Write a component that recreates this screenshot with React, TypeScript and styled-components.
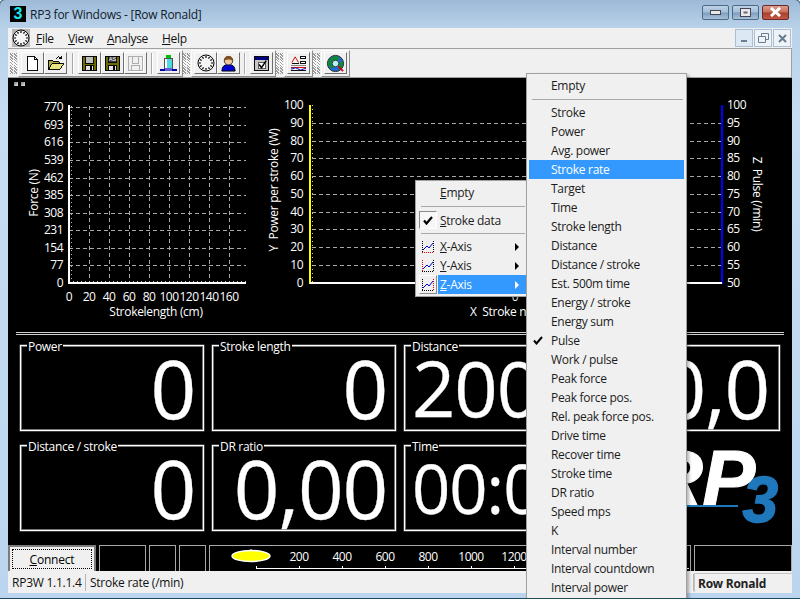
import React from 'react';
import styled, { createGlobalStyle } from 'styled-components';

const GlobalStyle = createGlobalStyle`
    html, body { margin: 0; padding: 0; background: #fff; }
    body { font-family: "Open Sans", "Liberation Sans", sans-serif; font-size: 12px; color: #000; }
`

const Frame = styled.div`
    position: relative;
    box-sizing: border-box;
    display: flex;
    flex-direction: column;
    overflow: hidden;
    margin: -1px 0 0 -1px;
    width: 802px;
    height: 600px;
    padding: 0 8px 5px 8px;
    background: linear-gradient(180deg, #9db9d6 0px, #b9d2ea 28px, #c6dcf3 120px, #bcd5ee 600px);
    border: 1px solid #1d4a5c;
    border-radius: 6px 6px 0 0;
`

const TitleBar = styled.div`
    height: 28px;
    flex: none;
    display: flex;
    align-items: center;
    gap: 4px;
    padding-left: 2px;
`

const AppIcon = styled.div`
    width: 16px;
    height: 16px;
    background: #000;
    color: #19e6f0;
    font: bold 16px/16px "Liberation Sans", sans-serif;
    text-align: center;
`

const TitleText = styled.div`
    font-size: 12px;
    letter-spacing: -0.25px;
    color: #10202c;
    flex: 1;
`

const CaptionButtons = styled.div`
    display: flex;
    gap: 3px;
    margin: -4px 3px 0 0;
`

const CaptionButton = styled.div<{ $close?: boolean }>`
    width: 27px;
    height: 15px;
    box-sizing: border-box;
    border: 1px solid ${p => p.$close ? '#6b2a2a' : '#4d6a85'};
    border-radius: 2px;
    background: ${p => p.$close
        ? 'linear-gradient(180deg, #dc9c8c 0%, #c8705c 45%, #a8402c 55%, #c25a46 100%)'
        : 'linear-gradient(180deg, #bcd2e6 0%, #a4bfd8 45%, #7f9fbf 55%, #a6c0da 100%)'};
    display: flex;
    align-items: center;
    justify-content: center;
`

const MenuBar = styled.div`
    height: 20px;
    flex: none;
    display: flex;
    align-items: center;
    background: #f0f0f0;
`

const MenuClock = styled.div`
    width: 18px;
    height: 18px;
    margin: 0 6px 0 4px;
    background: #b8b8b8;
`

const MenuLabel = styled.span<{ $width: number }>`
    width: ${p => p.$width}px;
    font-size: 12px;
    letter-spacing: -0.3px;
    color: #111;
`

const Key = styled.span`
    text-decoration: underline;
`

const MdiButtons = styled.div`
    margin-left: auto;
    display: flex;
    gap: 1px;
    margin-right: 1px;
`

const MdiButton = styled.div<{ $first?: boolean }>`
    width: 18px;
    height: 18px;
    box-sizing: border-box;
    border: 1px solid #a9bfd4;
    background: ${p => p.$first ? '#dce9f5' : '#eef3f8'};
    display: flex;
    align-items: center;
    justify-content: center;
`

const CoolBar = styled.div`
    height: 30px;
    flex: none;
    box-sizing: border-box;
    display: flex;
    align-items: center;
    background: #f0f0f0;
    border: 1px solid #a0a0a0;
    border-left: 0;
    padding-left: 2px;
`

const Band = styled.div`
    height: 27px;
    display: flex;
    align-items: center;
    box-sizing: border-box;
    padding: 0 2px;
    border-right: 1px solid #8c8c8c;
    border-bottom: 1px solid #8c8c8c;
    border-top: 1px solid #fff;
    border-left: 1px solid #fff;
`

const Grip = styled.div`
    width: 3px;
    height: 21px;
    margin-right: 1px;
    background: repeating-linear-gradient(45deg, #9a9a9a 0 1px, #fff 1px 2px);
`

const ToolButton = styled.div`
    width: 23px;
    height: 22px;
    box-sizing: border-box;
    border: 1px solid;
    border-color: #fff #6e6e6e #6e6e6e #fff;
    display: flex;
    align-items: center;
    justify-content: center;
`

const ToolGap = styled.div<{ $wide?: boolean }>`
    width: 1px;
    height: 21px;
    margin: 0 4px 0 ${p => p.$wide ? '5px' : '4px'};
    background: #a8a8a8;
    border-right: 1px solid #fff;
`

const Client = styled.div`
    flex: 1;
    min-height: 0;
    background: #000;
    display: flex;
    flex-direction: column;
`

const ChartRow = styled.div`
    height: 254px;
    flex: none;
    display: flex;
`

const ChartSvg = styled.svg`
    display: block;
    flex: none;
    font-family: "Open Sans", "Liberation Sans", sans-serif;
    font-size: 12px;
    letter-spacing: -0.3px;
    fill: #fff;
`

const Tick = styled.text`
    letter-spacing: -0.5px;
`

const Divider = styled.div`
    height: 1px;
    flex: none;
    margin: 0 8px;
    border-top: 1px solid #d0d0d0;
    border-bottom: 1px solid #d0d0d0;
`

const TileGrid = styled.div`
    flex: none;
    display: grid;
    grid-template-columns: repeat(4, 184px);
    grid-template-rows: 86px 86px;
    column-gap: 8px;
    row-gap: 14px;
    padding: 10px 12px 14px 12px;
`

const Tile = styled.div`
    position: relative;
    box-sizing: border-box;
    border: 1px solid #fff;
    box-shadow: inset 0 0 0 1px #777, 0 0 0 0.5px #777;
    display: flex;
`

const TileLabel = styled.span`
    position: absolute;
    top: -7px;
    left: 6px;
    padding: 0 1px;
    background: #000;
    color: #fff;
    font-size: 12px;
    letter-spacing: -0.3px;
    line-height: 16px;
`

// The real value text shrinks to fit its box, so the size varies per tile.
const TileValue = styled.div<{ $left?: boolean; $size: number; $pad: number }>`
    flex: 1;
    padding: 0 ${p => p.$left ? 0 : p.$pad}px 0 ${p => p.$left ? p.$pad : 0}px;
    text-align: ${p => p.$left ? 'left' : 'right'};
    white-space: nowrap;
    color: #fff;
    font-size: ${p => p.$size}px;
    line-height: 84px;
    letter-spacing: -0.015em;
    -webkit-text-stroke: 0.3px #fff;
`

const Logo = styled.div`
    display: flex;
    align-items: flex-start;
    justify-content: flex-end;
    font-family: "Liberation Sans", sans-serif;
    font-weight: bold;
    font-style: italic;
`

const LogoWord = styled.span`
    position: relative;
    color: #fff;
    font-size: 80px;
    line-height: 68px;
    height: 62px;
    letter-spacing: -1px;
    -webkit-text-stroke: 1px #fff;

    &::after {
        content: '';
        position: absolute;
        left: 0;
        right: 16px;
        bottom: 0;
        height: 2px;
        background: #1f78bb;
    }
`

const LogoDigit = styled.span`
    color: #1f78bb;
    font-size: 64px;
    line-height: 64px;
    margin: 23px 2px 0 -12px;
    -webkit-text-stroke: 1.5px #1f78bb;
`

const BottomRow = styled.div`
    height: 28px;
    flex: none;
    display: flex;
    gap: 3px;
    padding-bottom: 1px;
    box-sizing: border-box;
`

const ConnectWrap = styled.div`
    width: 89px;
    box-sizing: border-box;
    border: 2px solid #7c7c7c;
    margin-bottom: -1px;
    background: #f0f0f0;
    padding: 2px;
`

const ConnectButton = styled.div`
    height: 100%;
    box-sizing: border-box;
    border: 1px dotted #000;
    display: flex;
    align-items: center;
    justify-content: center;
    font-size: 12px;
    letter-spacing: -0.2px;
`

const Slot = styled.div<{ $width: number }>`
    width: ${p => p.$width}px;
    flex: none;
    box-sizing: border-box;
    border: 1px solid #a8a8a8;
    overflow: hidden;
`

const StatusBar = styled.div`
    height: 22px;
    flex: none;
    display: flex;
    align-items: center;
    background: #f0f0f0;
    font-size: 12px;
    letter-spacing: -0.25px;
    color: #111;
`

const StatusCell = styled.div<{ $width?: number }>`
    width: ${p => p.$width ? `${p.$width}px` : 'auto'};
    flex: ${p => p.$width ? 'none' : '1'};
    box-sizing: border-box;
    padding-left: 4px;
    height: 17px;
    line-height: 17px;
    border-right: 1px solid #b4b4b4;
`

const StatusName = styled.div`
    width: 98px;
    flex: none;
    box-sizing: border-box;
    padding-left: 3px;
    height: 19px;
    line-height: 19px;
    font-weight: 700;
    color: #222;
    border: 1px solid #c4c4c4;
    border-width: 1px 0 0 1px;
`

const Popup = styled.div`
    position: absolute;
    box-sizing: border-box;
    background: #f0f0f0;
    border: 1px solid #a0a0a0;
    box-shadow: 2px 2px 3px rgba(0, 0, 0, 0.3);
    padding: 2px;
    font-size: 12px;
    letter-spacing: -0.3px;
`

const MainPopup = styled(Popup)`
    left: 526px;
    top: 73px;
    width: 161px;
    height: 527px;
    z-index: 2;
`

const SidePopup = styled(Popup)`
    left: 415px;
    top: 180px;
    width: 114px;
    height: 117px;
    z-index: 1;
`

const MenuRow = styled.div<{ $active?: boolean; $indent: number }>`
    position: relative;
    height: 19px;
    line-height: 19px;
    padding-left: ${p => p.$indent}px;
    color: ${p => p.$active ? '#fff' : '#1c1c1c'};
    background: ${p => p.$active ? '#3399ff' : 'transparent'};
    white-space: nowrap;
`

const MenuGap = styled.div<{ $height: number }>`
    height: ${p => p.$height}px;
    display: flex;
    align-items: center;
    padding: 0 1px 0 3px;
    &::after {
        content: '';
        flex: 1;
        height: 1px;
        background: #a8a8a8;
    }
`

const Gutter = styled.div<{ $raised?: boolean; $sunken?: boolean }>`
    position: absolute;
    left: 1px;
    top: 0;
    width: 18px;
    height: ${p => p.$sunken ? '18px' : '19px'};
    box-sizing: border-box;
    display: flex;
    align-items: center;
    justify-content: center;
    ${p => p.$raised && 'border: 1px solid; border-color: #fff #8a8a8a #8a8a8a #fff;'}
    ${p => p.$sunken && 'border: 1px solid; border-color: #8a8a8a #fff #fff #8a8a8a; background: #f7f7f7;'}
`

const SideRowBody = styled.div<{ $active?: boolean }>`
    position: relative;
    margin-left: 20px;
    padding-left: 2px;
    height: 19px;
    line-height: 19px;
    color: ${p => p.$active ? '#fff' : '#1c1c1c'};
    background: ${p => p.$active ? '#3399ff' : 'transparent'};
`

const SideRowWrap = styled.div`
    position: relative;
`

const Arrow = styled.span<{ $active?: boolean }>`
    position: absolute;
    right: 7px;
    top: 6px;
    width: 0;
    height: 0;
    border-left: 4px solid ${p => p.$active ? '#fff' : '#000'};
    border-top: 4px solid transparent;
    border-bottom: 4px solid transparent;
`

const PopupCheck = styled.svg`
    position: absolute;
    left: 4px;
    top: 5px;
`

const Squares = styled.div`
    position: absolute;
    left: 14px;
    top: 82px;
    display: flex;
    gap: 3px;
`

const Square = styled.div`
    width: 4px;
    height: 4px;
    background: linear-gradient(135deg, #777, #eee);
`

const CheckMark = () => (
    <svg width="10" height="9" viewBox="0 0 10 9"><path d="M1 4.5 L3.5 7.5 L9 1" fill="none" stroke="#000" strokeWidth="2.2" /></svg>
)

const Ico = ({ children }: { children: React.ReactNode }) => (
    <svg width="17" height="17" viewBox="0 0 18 18" shapeRendering="crispEdges">{children}</svg>
)

const NewIcon = () => <Ico><path d="M3.5 1.5 H11 L14.5 5 V16.5 H3.5 Z" fill="#fff" stroke="#000" /><path d="M11 1.5 V5 H14.5" fill="none" stroke="#000" /></Ico>
const OpenIcon = () => (
    <Ico>
        <path d="M1.5 5.5 H6 L7 7 H13 V15.5 H1.5 Z" fill="#a8a840" stroke="#000" />
        <path d="M1.5 15.5 L5 9.5 H17.5 L13.5 15.5 Z" fill="#e6e680" stroke="#000" />
        <path d="M9 3.5 Q12 0.5 15.5 3.5 M15.5 1 V4 H12.5" fill="none" stroke="#000" />
    </Ico>
)
const Floppy = ({ label }: { label?: string }) => (
    <Ico>
        <rect x="1.5" y="1.5" width="15" height="15" fill="#6c6c00" stroke="#000" />
        <rect x="4.5" y="1.5" width="9" height={label ? 6 : 7} fill={label ? '#444' : '#c0c0c0'} stroke="#000" />
        {label && <text x="9" y="6.8" textAnchor="middle" fontSize="6" fontFamily="Liberation Sans" fill="#fff">{label}</text>}
        <rect x="4.5" y="11.5" width="9" height="5" fill="#e4e4e4" stroke="#000" />
        <rect x="10" y="12" width="2" height="4" fill="#000" />
    </Ico>
)
const SaveOff = () => (
    <Ico>
        <rect x="1.5" y="1.5" width="15" height="15" fill="none" stroke="#a8a8a8" />
        <path d="M5.5 2 V9 H12.5 V2 M4.5 16 V11.5 H13.5 V16" fill="none" stroke="#a8a8a8" />
        <path d="M2.5 17.5 H17.5 V2.5" fill="none" stroke="#fff" />
    </Ico>
)
const DoorIcon = () => (
    <Ico>
        <rect x="6" y="0" width="6" height="3" fill="#00c000" />
        <rect x="4.5" y="3.5" width="9" height="11" fill="#fff" stroke="#444" />
        <rect x="7" y="4" width="6" height="10" fill="#50d8e0" />
        <path d="M0 16 H5 M13 16 H18" stroke="#0000a8" strokeWidth="2" />
        <rect x="5" y="14" width="8" height="3" fill="#6060d0" />
    </Ico>
)
const ClockIcon = ({ size = 18 }: { size?: number }) => (
    <svg width={size} height={size} viewBox="0 0 18 18">
        <circle cx="9" cy="9" r="8" fill="#f4f4f4" stroke="#000" />
        {Array.from({ length: 12 }).map((_, i) => {
            const a = (i * Math.PI) / 6
            return <line key={i} x1={9 + 5 * Math.cos(a)} y1={9 + 5 * Math.sin(a)} x2={9 + 7 * Math.cos(a)} y2={9 + 7 * Math.sin(a)} stroke="#000" strokeWidth="1.2" />
        })}
    </svg>
)
const PersonIcon = () => (
    <Ico>
        <path d="M2 17 Q2 10 9 10 Q16 10 16 17 Z" fill="#0000d0" stroke="#000" shapeRendering="auto" />
        <circle cx="9" cy="6" r="4.5" fill="#f0c8a0" stroke="#333" shapeRendering="auto" />
        <path d="M4.5 6 Q4.5 1 9 1 Q13.5 1 13.5 6 Q9 3.5 4.5 6 Z" fill="#805020" shapeRendering="auto" />
    </Ico>
)
const CheckListIcon = () => (
    <Ico>
        <rect x="1.5" y="1.5" width="15" height="15" fill="#c8c8c8" stroke="#000" />
        <rect x="2" y="2" width="14" height="3" fill="#000080" />
        <rect x="5.5" y="7.5" width="8" height="7" fill="#fff" stroke="#555" />
        <path d="M6.5 10 L9 13.5 L14 6" fill="none" stroke="#000" strokeWidth="1.6" shapeRendering="auto" />
    </Ico>
)
const ReportIcon = () => (
    <Ico>
        <path d="M2 8.5 H10" stroke="#000" />
        <path d="M2 8 L5.5 2 L9 8" fill="none" stroke="#d00000" shapeRendering="auto" />
        <rect x="11.5" y="1.5" width="5" height="2" fill="#fff" stroke="#000" />
        <rect x="11.5" y="6.5" width="5" height="2" fill="#fff" stroke="#000" />
        <path d="M1 11.5 H17" stroke="#808080" />
        <path d="M1 13.5 H17" stroke="#d00000" />
        <path d="M1 15 L6 13.5 L11 16 L17 14" fill="none" stroke="#0000d0" shapeRendering="auto" />
        <path d="M1 16.5 H17" stroke="#000" />
    </Ico>
)
const GlobeIcon = () => (
    <svg width="19" height="19" viewBox="0 0 20 20">
        <circle cx="10" cy="10" r="8.5" fill="#206ad0" stroke="#222" />
        <path d="M3 6 L10 1.5 L14 4 L12 8 L7 9 L9 14 L5 15 L2 11 Z" fill="#0c8a30" />
        <path d="M13 9 L18 8 L17 14 L13 17 Z" fill="#0c8a30" />
        <circle cx="10" cy="10" r="3.5" fill="#b8f0f4" stroke="#335" />
        <path d="M13 13 L18 18" stroke="#d00020" strokeWidth="2" />
    </svg>
)

const AxisIcon = ({ axis }: { axis: 'x' | 'y' | 'z' }) => (
    <svg width="14" height="14" viewBox="0 0 14 14" shapeRendering="crispEdges">
        <path d="M1.5 1 V13" stroke={axis === 'y' ? '#e00000' : '#000'} strokeDasharray="1 1" />
        <path d="M12.5 1 V13" stroke={axis === 'z' ? '#e00000' : '#000'} strokeDasharray="1 1" />
        <path d="M1 12.5 H13" stroke={axis === 'x' ? '#e00000' : '#000'} strokeDasharray="1 1" />
        <path d="M2 10 L6 6 L8 8 L12 3" fill="none" stroke="#0000d0" shapeRendering="auto" />
    </svg>
)

const forceLabels = [770, 693, 616, 539, 462, 385, 308, 231, 154, 77, 0]
const forceY = [107, 125, 142, 160, 178, 195, 213, 230, 248, 265, 283]
const lengthLabels = [0, 20, 40, 60, 80, 100, 120, 140, 160]
const gridY = [123, 141, 158, 176, 194, 212, 229, 247, 265]
const powerY = [105, ...gridY, 283]
const powerLabels = [100, 90, 80, 70, 60, 50, 40, 30, 20, 10, 0]
const pulseLabels = [100, 95, 90, 85, 80, 75, 70, 65, 60, 55, 50]

const ForceChart = () => (
    <ChartSvg width={252} height={254} viewBox="8 78 252 254">
        {forceY.slice(0, -1).map(y => <line key={y} x1={69} x2={246} y1={y} y2={y} stroke="#a8a8a8" strokeDasharray="4 3" shapeRendering="crispEdges" />)}
        {lengthLabels.slice(1).map((l, i) => <line key={l} x1={89 + i * 20} x2={89 + i * 20} y1={106} y2={283} stroke="#a8a8a8" strokeDasharray="4 3" shapeRendering="crispEdges" />)}
        <line x1={71} x2={71} y1={106} y2={283} stroke="#bbb" strokeDasharray="1 3" shapeRendering="crispEdges" />
        <line x1={69} x2={246} y1={281} y2={281} stroke="#bbb" strokeDasharray="1 3" shapeRendering="crispEdges" />
        <line x1={69} x2={69} y1={105} y2={284} stroke="#fff" strokeWidth={2} shapeRendering="crispEdges" />
        <line x1={68} x2={246} y1={283} y2={283} stroke="#fff" strokeWidth={2} shapeRendering="crispEdges" />
        {forceLabels.map((l, i) => <Tick key={l} x={63} y={forceY[i] + 4} textAnchor="end">{l}</Tick>)}
        {lengthLabels.map((l, i) => <Tick key={l} x={69 + i * 20} y={301} textAnchor="middle">{l}</Tick>)}
        <text x={156} y={316} textAnchor="middle">Strokelength (cm)</text>
        <text transform="translate(38 193) rotate(-90)" textAnchor="middle">Force (N)</text>
    </ChartSvg>
)

const StrokeChart = () => (
    <ChartSvg width={532} height={254} viewBox="260 78 532 254">
        {gridY.map(y => <line key={y} x1={312} x2={722} y1={y} y2={y} stroke="#a8a8a8" strokeDasharray="4 3" shapeRendering="crispEdges" />)}
        <line x1={312} x2={312} y1={105} y2={283} stroke="#e0e000" strokeDasharray="1 3" shapeRendering="crispEdges" />
        <line x1={310} x2={310} y1={105} y2={284} stroke="#ffff00" strokeWidth={2} shapeRendering="crispEdges" />
        <line x1={722} x2={722} y1={105} y2={284} stroke="#0000ff" strokeWidth={2} shapeRendering="crispEdges" />
        <line x1={310} x2={722} y1={283} y2={283} stroke="#fff" strokeWidth={2} shapeRendering="crispEdges" />
        {powerLabels.map((l, i) => <Tick key={l} x={303} y={powerY[i] + 4} textAnchor="end">{l}</Tick>)}
        {pulseLabels.map((l, i) => <Tick key={l} x={727} y={powerY[i] + 4}>{l}</Tick>)}
        <Tick x={515} y={301} textAnchor="middle">0</Tick>
        <text x={470} y={316} xmlSpace="preserve">X  Stroke number</text>
        <text transform="translate(278 190) rotate(-90)" textAnchor="middle" xmlSpace="preserve">Y  Power per stroke (W)</text>
        <text transform="translate(753 194) rotate(90)" textAnchor="middle" xmlSpace="preserve">Z  Pulse (/min)</text>
    </ChartSvg>
)

const Gauge = () => (
    <ChartSvg width={480} height={26} viewBox="211 546 480 26">
        <ellipse cx={252} cy={556} rx={19} ry={5.5} fill="#ffff00" stroke="#fff" strokeWidth={1.5} />
        <line x1={252} x2={252} y1={549} y2={551} stroke="#fff" />
        <line x1={257} x2={690} y1={568} y2={568} stroke="#fff" shapeRendering="crispEdges" />
        {[257, 300, 343, 386, 429, 472, 515, 558, 601, 644, 687].map(x => <line key={x} x1={x} x2={x} y1={566} y2={568} stroke="#fff" shapeRendering="crispEdges" />)}
        {[200, 400, 600, 800, 1000, 1200].map((v, i) => <Tick key={v} x={300 + i * 43} y={561} textAnchor="middle">{v}</Tick>)}
    </ChartSvg>
)

const zItems = ['Stroke', 'Power', 'Avg. power', 'Stroke rate', 'Target', 'Time', 'Stroke length', 'Distance', 'Distance / stroke', 'Est. 500m time', 'Energy / stroke', 'Energy sum', 'Pulse', 'Work / pulse', 'Peak force', 'Peak force pos.', 'Rel. peak force pos.', 'Drive time', 'Recover time', 'Stroke time', 'DR ratio', 'Speed mps', 'K', 'Interval number', 'Interval countdown', 'Interval power']

const tiles: { label: string; value: string; size: number; pad: number; left?: boolean }[] = [
    { label: 'Power', value: '0', size: 80, pad: 8 },
    { label: 'Stroke length', value: '0', size: 80, pad: 8 },
    { label: 'Distance', value: '2000', size: 76, pad: 7, left: true },
    { label: 'Pace', value: '0,0', size: 80, pad: 10 },
    { label: 'Distance / stroke', value: '0', size: 80, pad: 8 },
    { label: 'DR ratio', value: '0,00', size: 80, pad: 8 },
    { label: 'Time', value: '00:00', size: 67, pad: 7, left: true },
]

const App = () => (
    <>
        <GlobalStyle />
        <Frame>
            <TitleBar>
                <AppIcon>3</AppIcon>
                <TitleText>RP3 for Windows - [Row Ronald]</TitleText>
                <CaptionButtons>
                    <CaptionButton><svg width="11" height="5"><rect x="0.5" y="0.5" width="10" height="4" fill="#e8e8e8" stroke="#445" /></svg></CaptionButton>
                    <CaptionButton><svg width="11" height="9"><rect x="0.5" y="0.5" width="10" height="8" fill="#e8e8e8" stroke="#445" /><rect x="3.5" y="3.5" width="4" height="2" fill="#667" /></svg></CaptionButton>
                    <CaptionButton $close><svg width="13" height="10" viewBox="0 0 13 10"><path d="M2 1 L11 9 M11 1 L2 9" stroke="#fff" strokeWidth="3" /></svg></CaptionButton>
                </CaptionButtons>
            </TitleBar>
            <MenuBar>
                <MenuClock><ClockIcon /></MenuClock>
                <MenuLabel $width={32}><Key>F</Key>ile</MenuLabel>
                <MenuLabel $width={39}><Key>V</Key>iew</MenuLabel>
                <MenuLabel $width={55}><Key>A</Key>nalyse</MenuLabel>
                <MenuLabel $width={40}><Key>H</Key>elp</MenuLabel>
                <MdiButtons>
                    <MdiButton $first><svg width="9" height="9"><rect x="1" y="6" width="6" height="2" fill="#6b7c8c" /></svg></MdiButton>
                    <MdiButton><svg width="11" height="10" fill="none" stroke="#6b7c8c"><path d="M3.5 3 V0.5 H10.5 V6.5 H8 M0.5 3.5 H7.5 V9.5 H0.5 Z" /></svg></MdiButton>
                    <MdiButton><svg width="9" height="9"><path d="M1 1 L8 8 M8 1 L1 8" stroke="#6b7c8c" strokeWidth="2" /></svg></MdiButton>
                </MdiButtons>
            </MenuBar>
            <CoolBar>
                <Grip /><Grip />
                <Band>
                    <ToolButton><NewIcon /></ToolButton>
                    <ToolButton><OpenIcon /></ToolButton>
                    <ToolGap $wide />
                    <ToolButton><Floppy /></ToolButton>
                    <ToolButton><Floppy label="AS" /></ToolButton>
                    <ToolButton><SaveOff /></ToolButton>
                    <ToolGap />
                    <ToolButton><DoorIcon /></ToolButton>
                </Band>
                <Grip /><Grip />
                <Band>
                    <ToolButton><ClockIcon /></ToolButton>
                    <ToolButton><PersonIcon /></ToolButton>
                    <ToolGap />
                    <ToolButton><CheckListIcon /></ToolButton>
                </Band>
                <Grip /><Grip />
                <Band>
                    <ToolButton><ReportIcon /></ToolButton>
                </Band>
                <Grip /><Grip />
                <Band>
                    <ToolButton><GlobeIcon /></ToolButton>
                </Band>
            </CoolBar>
            <Client>
                <ChartRow>
                    <ForceChart />
                    <StrokeChart />
                </ChartRow>
                <Divider />
                <TileGrid>
                    {tiles.map(t => (
                        <Tile key={t.label}>
                            <TileLabel>{t.label}</TileLabel>
                            <TileValue $left={t.left} $size={t.size} $pad={t.pad}>{t.value}</TileValue>
                        </Tile>
                    ))}
                    <Logo>
                        <LogoWord>RP</LogoWord>
                        <LogoDigit>3</LogoDigit>
                    </Logo>
                </TileGrid>
                <BottomRow>
                    <ConnectWrap>
                        <ConnectButton><span><Key>C</Key>onnect</span></ConnectButton>
                    </ConnectWrap>
                    <Slot $width={47} />
                    <Slot $width={27} />
                    <Slot $width={27} />
                    <Slot $width={482}><Gauge /></Slot>
                    <Slot $width={98} />
                </BottomRow>
            </Client>
            <StatusBar>
                <StatusCell $width={78}>RP3W 1.1.1.4</StatusCell>
                <StatusCell>Stroke rate (/min)</StatusCell>
                <StatusName>Row Ronald</StatusName>
            </StatusBar>
            <Squares><Square /><Square /></Squares>
            <SidePopup>
                <MenuRow $indent={22}><Key>E</Key>mpty</MenuRow>
                <MenuGap $height={9} />
                <SideRowWrap>
                    <Gutter $sunken><CheckMark /></Gutter>
                    <SideRowBody><Key>S</Key>troke data</SideRowBody>
                </SideRowWrap>
                <MenuGap $height={7} />
                <SideRowWrap>
                    <Gutter><AxisIcon axis="x" /></Gutter>
                    <SideRowBody><Key>X</Key>-Axis<Arrow /></SideRowBody>
                </SideRowWrap>
                <SideRowWrap>
                    <Gutter><AxisIcon axis="y" /></Gutter>
                    <SideRowBody><Key>Y</Key>-Axis<Arrow /></SideRowBody>
                </SideRowWrap>
                <SideRowWrap>
                    <Gutter $raised><AxisIcon axis="z" /></Gutter>
                    <SideRowBody $active><Key>Z</Key>-Axis<Arrow $active /></SideRowBody>
                </SideRowWrap>
            </SidePopup>
            <MainPopup>
                <MenuRow $indent={22}>Empty</MenuRow>
                <MenuGap $height={8} />
                {zItems.map(item => (
                    <MenuRow key={item} $indent={22} $active={item === 'Stroke rate'}>
                        {item === 'Pulse' && <PopupCheck width="10" height="9" viewBox="0 0 10 9"><path d="M1 4.5 L3.5 7.5 L9 1" fill="none" stroke="#000" strokeWidth="2" /></PopupCheck>}
                        {item}
                    </MenuRow>
                ))}
            </MainPopup>
        </Frame>
    </>
)

export default App
